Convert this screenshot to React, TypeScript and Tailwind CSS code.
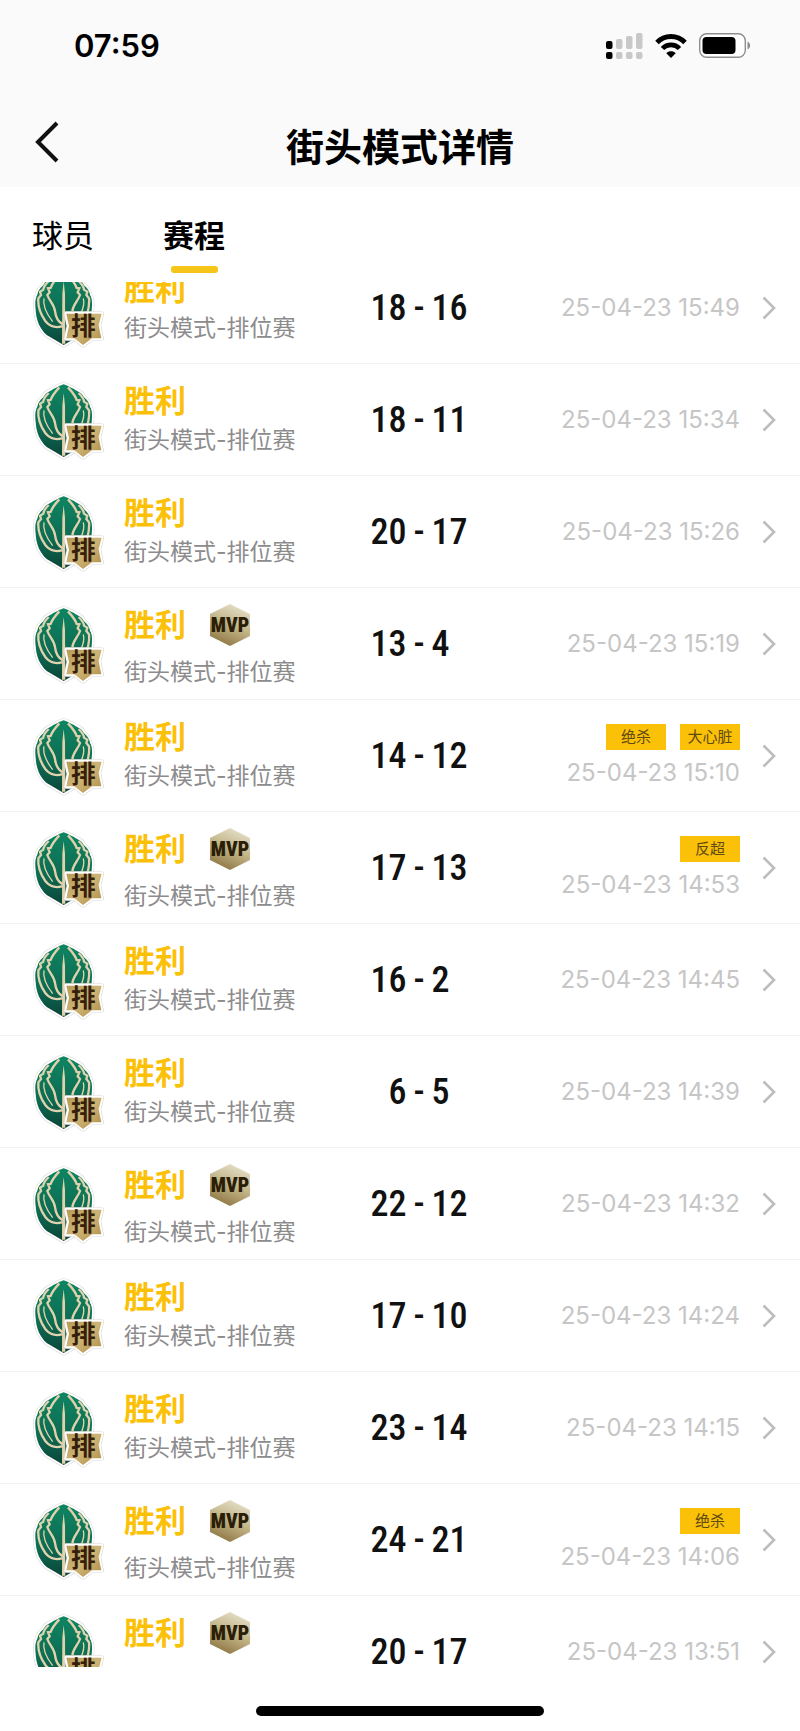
import clsx from 'clsx'

type Match = {
  home: number
  away: number
  date: string
  mvp?: boolean
  tags?: string[]
}

const matches: Match[] = [
  { home: 18, away: 16, date: '25-04-23 15:49' },
  { home: 18, away: 11, date: '25-04-23 15:34' },
  { home: 20, away: 17, date: '25-04-23 15:26' },
  { home: 13, away: 4, date: '25-04-23 15:19', mvp: true },
  { home: 14, away: 12, date: '25-04-23 15:10', tags: ['绝杀', '大心脏'] },
  { home: 17, away: 13, date: '25-04-23 14:53', mvp: true, tags: ['反超'] },
  { home: 16, away: 2, date: '25-04-23 14:45' },
  { home: 6, away: 5, date: '25-04-23 14:39' },
  { home: 22, away: 12, date: '25-04-23 14:32', mvp: true },
  { home: 17, away: 10, date: '25-04-23 14:24' },
  { home: 23, away: 14, date: '25-04-23 14:15' },
  { home: 24, away: 21, date: '25-04-23 14:06', mvp: true, tags: ['绝杀'] },
  { home: 20, away: 17, date: '25-04-23 13:51', mvp: true },
]

export default function App() {
  return (
    <div className="flex h-screen flex-col overflow-hidden bg-white font-['Inter','Noto_Sans_CJK_SC',sans-serif] text-black">
      {/* Shared gradients for the row artwork */}
      <svg width="0" height="0" className="absolute" aria-hidden="true">
        <defs>
          <linearGradient id="leaf" x1="0" y1="0" x2="0" y2="1">
            <stop offset="0" stopColor="#0f8562" />
            <stop offset="0.6" stopColor="#0d6b52" />
            <stop offset="1" stopColor="#0a4337" />
          </linearGradient>
          <linearGradient id="ribbon" x1="0" y1="0" x2="1" y2="1">
            <stop offset="0" stopColor="#b69a58" />
            <stop offset="0.5" stopColor="#cdb475" />
            <stop offset="1" stopColor="#b28f48" />
          </linearGradient>
          <linearGradient id="hexagon" x1="0.7" y1="0" x2="0.3" y2="1">
            <stop offset="0" stopColor="#e6e0cb" />
            <stop offset="0.5" stopColor="#c2b486" />
            <stop offset="1" stopColor="#8c7440" />
          </linearGradient>
        </defs>
      </svg>

      <header className="bg-[#fafafa]">
        <StatusBar />
        <div className="grid h-24 grid-cols-[1fr_auto_1fr] items-center px-8 pt-4">
          <button type="button" aria-label="返回" className="-mt-3 justify-self-start">
            <svg width="30" height="44" viewBox="0 0 30 44" fill="none" stroke="#111" strokeWidth="4">
              <path d="M25 4 6 23 25 42" />
            </svg>
          </button>
          <h1 className="text-[38px] leading-[48px] font-bold">街头模式详情</h1>
        </div>
      </header>

      <nav role="tablist" className="flex h-[95px] shrink-0 gap-[69px] px-8 pt-[29px]">
        <Tab label="球员" />
        <Tab label="赛程" active />
      </nav>

      <main className="min-h-0 flex-1 overflow-hidden">
        {/* List is scrolled part way into the first row */}
        <ul className="-mt-[30px]">
          {matches.map((match) => (
            <MatchRow key={match.date} match={match} />
          ))}
        </ul>
      </main>

      <footer className="flex h-16 shrink-0 items-end justify-center pb-[15px]">
        <div className="h-[10px] w-[36%] rounded-full bg-black" />
      </footer>
    </div>
  )
}

function Tab({ label, active }: { label: string; active?: boolean }) {
  return (
    <button
      type="button"
      role="tab"
      aria-selected={!!active}
      className={clsx(
        'flex flex-col items-center gap-[10px] text-[31px] leading-[40px]',
        active ? 'font-bold' : 'font-normal',
      )}
    >
      {label}
      {active && <span className="h-[7px] w-[47px] rounded-[3px] bg-[#f5c518]" />}
    </button>
  )
}

function MatchRow({ match }: { match: Match }) {
  return (
    <li className="border-b border-[#f3f3f3]">
      <a href="#" className="flex h-[111px] items-center pr-6 pl-8">
        <Emblem />

        <div className="ml-4 flex w-[228px] flex-col gap-[10px] pt-px">
          <div className="flex items-center gap-[23px]">
            <span className="text-[31px] leading-[30px] font-bold text-[#fbc108]">胜利</span>
            {match.mvp && <MvpBadge />}
          </div>
          <p className="text-[23px] leading-7 whitespace-nowrap text-[#8c8c8c]">街头模式-排位赛</p>
        </div>

        <div className="grid w-[134px] shrink-0 grid-cols-[1fr_auto_1fr] items-center gap-x-[7px] font-['Roboto_Condensed','Liberation_Sans_Narrow','Roboto',sans-serif] text-4xl font-medium text-[#111]">
          <span className="text-right">{match.home}</span>
          <span>-</span>
          <span>{match.away}</span>
        </div>

        <div className="flex flex-1 flex-col items-end gap-[9px]">
          {match.tags && (
            <div className="flex gap-[14px]">
              {match.tags.map((tag) => (
                <span key={tag} className="h-[26px] w-[60px] bg-[#fbc108] text-center text-[15px] leading-[26px] text-[#5e4a12]">
                  {tag}
                </span>
              ))}
            </div>
          )}
          <time className="text-2xl leading-7 whitespace-nowrap text-[#c6c6c6]">{match.date}</time>
        </div>

        <svg className="ml-[22px] shrink-0" width="14" height="24" viewBox="0 0 14 24" fill="none" stroke="#bdbdbd" strokeWidth="2.6">
          <path d="M1.5 1.5 12 12 1.5 22.5" />
        </svg>
      </a>
    </li>
  )
}

function Emblem() {
  const leaf =
    'M95 12C108 17 122 24 134 31 144 35 152 41 156 51 166 59 172 67 174 79 181 91 181 105 179 125 177 158 166 182 146 200L95 230 44 200C24 182 13 158 11 125 9 105 9 91 16 79 18 67 24 59 34 51 38 41 46 35 56 31 68 24 82 17 95 12Z'
  const ribbon = 'M103 136H209L200 171 208 210H180L153 230 127 210H103L111 173Z'

  return (
    <svg className="shrink-0" width="76" height="82" viewBox="0 -4 228 246" aria-hidden="true">
      <path d={leaf} fill="none" stroke="#e0e0e0" strokeWidth="15" strokeLinejoin="round" />
      <path d={leaf} fill="#fff" stroke="#fff" strokeWidth="11" strokeLinejoin="round" />
      <path d={leaf} fill="url(#leaf)" />
      <path d="M95 38 99 76 100 226H90L91 76Z" fill="#e0d2ac" />
      <g fill="none" stroke="#e0d2ac" strokeWidth="7">
        <path d="M82 21C68 36 60 46 56 59L48 60 53 72 46 80C52 98 66 108 69 128 71 146 76 160 93 168" />
        <path d="M108 21C122 36 130 46 134 59L142 60 137 72 144 80C138 98 124 108 121 128" />
        <path d="M50 38C40 48 34 56 34 64L24 70 27 80 19 90C17 114 26 138 40 158 54 176 76 180 97 172" />
        <path d="M140 38C150 48 156 56 156 64L166 70 163 80 171 90C173 106 170 120 166 136" />
        <path d="M36 90C32 110 42 134 62 160" strokeWidth="4" />
        <path d="M154 90C158 106 154 120 146 136" strokeWidth="4" />
      </g>
      <path d={ribbon} fill="none" stroke="#dcdcdc" strokeWidth="15" strokeLinejoin="round" />
      <path d={ribbon} fill="#fff" stroke="#fff" strokeWidth="11" strokeLinejoin="round" />
      <path d={ribbon} fill="url(#ribbon)" />
      <text
        x="154"
        y="200"
        textAnchor="middle"
        fontSize="74"
        fill="#36200c"
        className="font-['Noto_Sans_CJK_SC',sans-serif] font-bold"
      >
        排
      </text>
    </svg>
  )
}

function MvpBadge() {
  return (
    <svg width="42" height="46" viewBox="0 0 42 46" role="img" aria-label="MVP">
      <path d="M21 2 41 12V34L21 44 1 34V12Z" fill="url(#hexagon)" />
      <text
        x="21"
        y="30"
        textAnchor="middle"
        fontSize="20"
        fill="#2a1e08"
        className="font-['Roboto_Condensed','Liberation_Sans_Narrow','Roboto',sans-serif] font-black"
      >
        MVP
      </text>
    </svg>
  )
}

function StatusBar() {
  // Bar heights of the upper signal row; the second SIM is the dot row below
  const bars = [8, 10, 13, 16]

  return (
    <div className="flex h-[91px] items-center justify-between pr-[49px] pl-[74px]">
      <span className="text-[31px] leading-9 font-semibold">07:59</span>
      <div className="flex items-center gap-3">
        <svg width="37" height="26" viewBox="0 0 37 26" aria-hidden="true">
          {bars.map((height, i) => (
            <g key={height} fill={i === 0 ? '#000' : '#c8c8c8'}>
              <rect x={i * 10} y={16 - height} width="6.5" height={height} rx="2" />
              <rect x={i * 10} y="19" width="6.5" height="7" rx="2" />
            </g>
          ))}
        </svg>
        <svg width="32" height="24" viewBox="0 0 32 24" aria-hidden="true">
          <path d="M2 8.5C9.5 .5 22.5 .5 30 8.5" fill="none" stroke="#000" strokeWidth="4.8" />
          <path d="M7.5 14.5C12 9.7 20 9.7 24.5 14.5" fill="none" stroke="#000" strokeWidth="4.6" />
          <path d="M16 24 11.3 19.2C13.8 16.7 18.2 16.7 20.7 19.2Z" />
        </svg>
        <svg width="52" height="25" viewBox="0 0 52 25" aria-hidden="true">
          <rect x="0.7" y="0.7" width="45.6" height="23.6" rx="7" fill="#fff" stroke="#8e8e8e" strokeWidth="1.4" />
          <rect x="3.5" y="4" width="33" height="17" rx="4" />
          <path d="M48.5 8.5C52 10 52 15 48.5 16.5Z" fill="#8e8e8e" />
        </svg>
      </div>
    </div>
  )
}
